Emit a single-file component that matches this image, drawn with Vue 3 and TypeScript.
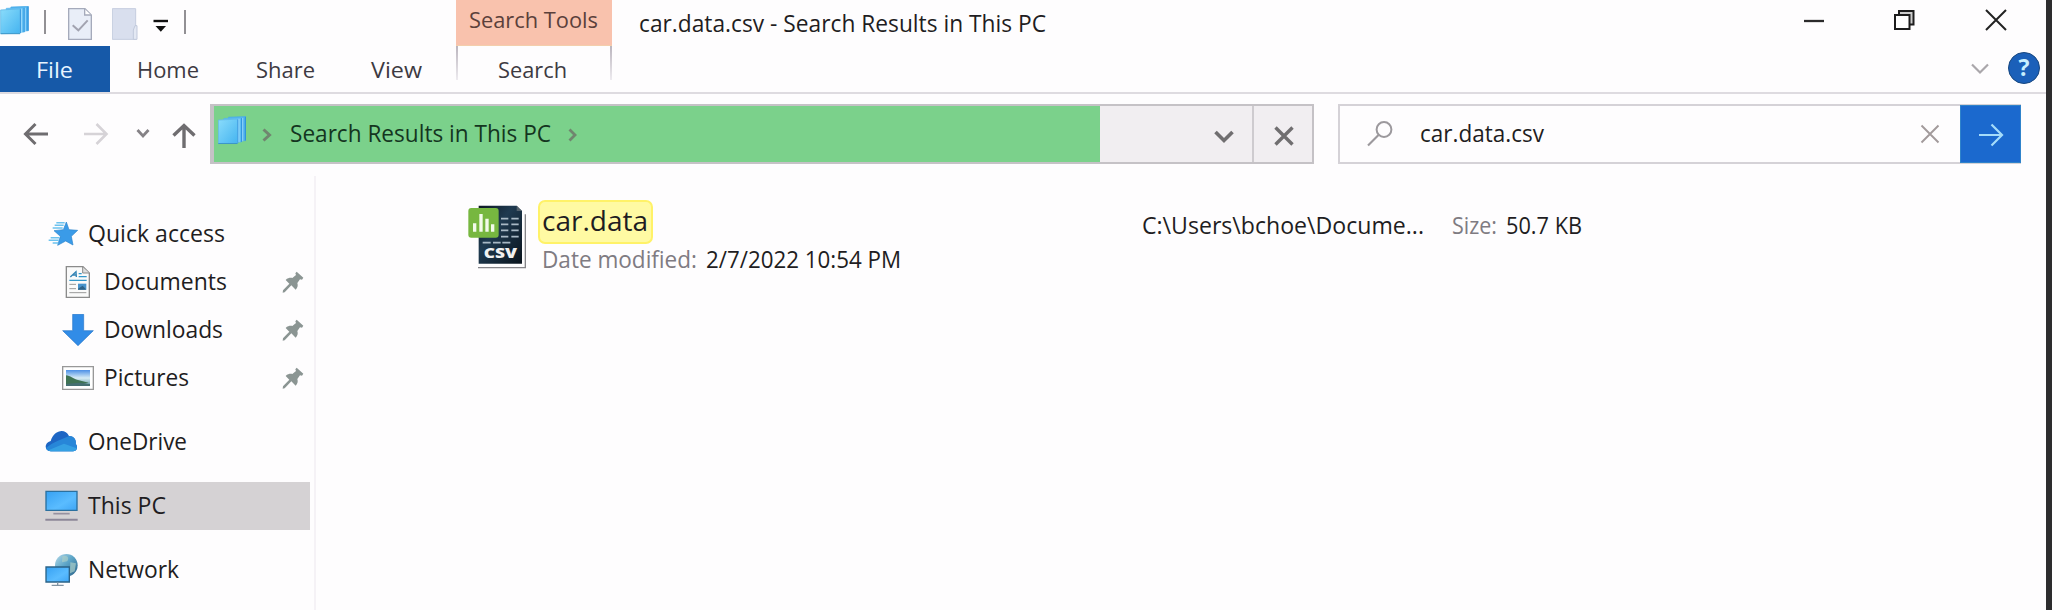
<script setup lang="ts">
import { h, type FunctionalComponent } from 'vue'

interface FitProps {
  text: string
  width: number
}

/* Single line of text set to an exact advance width. */
const FitText: FunctionalComponent<FitProps> = (props) =>
  h('svg', { width: props.width, height: 32, overflow: 'visible' }, [
    h(
      'text',
      { x: 0, y: 24, textLength: props.width, lengthAdjust: 'spacingAndGlyphs', fill: 'currentColor' },
      props.text,
    ),
  ])
FitText.props = ['text', 'width']

interface NavItem {
  label: string
  width: number
  icon: string
  child?: boolean
  gap?: boolean
  selected?: boolean
}

const navItems: NavItem[] = [
  { label: 'Quick access', width: 137, icon: 'star' },
  { label: 'Documents', width: 123, icon: 'doc', child: true },
  { label: 'Downloads', width: 119, icon: 'down', child: true },
  { label: 'Pictures', width: 85, icon: 'pic', child: true },
  { label: 'OneDrive', width: 99, icon: 'cloud', gap: true },
  { label: 'This PC', width: 78, icon: 'pc', gap: true, selected: true },
  { label: 'Network', width: 91, icon: 'net', gap: true },
]
</script>

<template>
  <div class="window">
    <svg class="defs" width="0" height="0">
      <defs>
        <linearGradient id="sheet" x1="0" y1="0" x2="1" y2="1">
          <stop offset="0" stop-color="#8adcfb" />
          <stop offset="1" stop-color="#45b4f0" />
        </linearGradient>
        <linearGradient id="screen" x1="0" y1="0" x2="1" y2="1">
          <stop offset="0" stop-color="#36a1f3" />
          <stop offset="0.6" stop-color="#5abcff" />
          <stop offset="1" stop-color="#3ea5f5" />
        </linearGradient>
        <linearGradient id="globe" x1="0" y1="0" x2="1" y2="1">
          <stop offset="0" stop-color="#b9dcea" />
          <stop offset="0.45" stop-color="#5ea6c8" />
          <stop offset="1" stop-color="#2a6288" />
        </linearGradient>
        <linearGradient id="scene" x1="0" y1="0" x2="0" y2="1">
          <stop offset="0" stop-color="#4b8fe6" />
          <stop offset="0.5" stop-color="#d6ecf6" />
          <stop offset="1" stop-color="#5f95a0" />
        </linearGradient>
        <linearGradient id="csvPage" x1="0" y1="0" x2="1" y2="1">
          <stop offset="0" stop-color="#0c1722" />
          <stop offset="0.4" stop-color="#1f3a50" />
          <stop offset="1" stop-color="#0a141d" />
        </linearGradient>
        <symbol id="stack" viewBox="0 0 86 88">
          <path d="M32 3 L85 1 V75 L32 79Z" fill="#4fb2ee" stroke="#49abe6" stroke-width="2" />
          <path d="M84 2 V75" stroke="#2a8edb" stroke-width="3" />
          <path d="M18 7 L73 5 V79 L18 82Z" fill="#62c0f5" stroke="#55b4ec" stroke-width="2" />
          <path d="M72 6 V79" stroke="#2f94de" stroke-width="3" />
          <path d="M1 12 L60 9 V83 L1 84Z" fill="url(#sheet)" stroke="#62b9e8" stroke-width="2.5" />
          <path d="M61 10 V82" stroke="#3a9be0" stroke-width="3" />
          <path d="M64.500 8 V80 M76 5 V77" stroke="#a5defb" stroke-width="2.500" />
          <path d="M1 84 H60" stroke="#3a96c8" stroke-width="3" />
        </symbol>
      </defs>
    </svg>

    <div class="client">
      <header class="titlebar">
        <svg class="app-icon" width="29" height="29"><use href="#stack" /></svg>
        <i class="sep first" />
        <svg class="qa-doc" width="24" height="32" viewBox="0 0 72 96">
          <path d="M2 2 H51 L70 21 V94 H2Z" fill="#e9eef8" stroke="#a5aabb" stroke-width="4" />
          <path d="M50 3 V21 H69" fill="#fff" stroke="#a5aabb" stroke-width="4" />
          <path d="M14 52 L31 67 L59 37" fill="none" stroke="#a2a3b0" stroke-width="6" />
        </svg>
        <svg class="qa-folder" width="26" height="32" viewBox="0 0 78 96">
          <path d="M1 2 H71 V94 H1Z" fill="#d9dfee" stroke="#c5cddf" stroke-width="3" />
          <path d="M64 94 V66 L69 53 H75 V94Z" fill="#e3e8f3" stroke="#c1c9db" stroke-width="3" />
        </svg>
        <svg class="qa-more" width="16" height="14" viewBox="0 0 16 14">
          <path d="M0.5 2 H15" stroke="#111" stroke-width="2.4" />
          <path d="M2.5 7 H13 L7.8 12.7Z" fill="#111" />
        </svg>
        <i class="sep second" />
        <div class="tools-tab"><FitText text="Search Tools" :width="129" /></div>
        <div class="title"><FitText text="car.data.csv - Search Results in This PC" :width="407" /></div>
        <div class="controls">
          <svg width="22" height="22" viewBox="0 0 22 22"><path d="M1 12 H21" stroke="#2b2b2b" stroke-width="2.3" /></svg>
          <svg width="22" height="22" viewBox="0 0 22 22" fill="none" stroke="#1d1d1d" stroke-width="2">
            <path d="M5 5 V2 H19.500 V15.5 H16" fill="#ccc" />
            <path d="M1 6 H15.500 V20 H1Z" fill="#fff" />
          </svg>
          <svg width="22" height="22" viewBox="0 0 22 22"><path d="M1 1 L21 21 M21 1 L1 21" stroke="#222" stroke-width="2" /></svg>
        </div>
      </header>

      <nav class="ribbon">
        <div class="file"><FitText text="File" :width="37" /></div>
        <div class="tab home"><FitText text="Home" :width="62" /></div>
        <div class="tab share"><FitText text="Share" :width="59" /></div>
        <div class="tab view"><FitText text="View" :width="51" /></div>
        <div class="tab search-tab"><FitText text="Search" :width="69" /></div>
        <svg class="collapse" width="18" height="12" viewBox="0 0 18 12">
          <path d="M1 1.5 L9 9.5 L17 1.5" fill="none" stroke="#aaa7ab" stroke-width="2.2" />
        </svg>
        <div class="help">?</div>
      </nav>

      <div class="toolbar">
        <div class="history">
          <svg width="210" height="60" viewBox="0 0 210 60" fill="none">
            <path d="M48 30 H26 M35.5 20 L25.5 30 L35.5 40" stroke="#6f6d70" stroke-width="3" />
            <path d="M84 30 H106 M96.500 20 L106.500 30 L96.500 40" stroke="#d6d3d7" stroke-width="2.6" />
            <path d="M137.500 26 L143 32 L148.500 26" stroke="#858286" stroke-width="2.8" />
            <path d="M184 44 V22 M173.500 31.500 L184 21.500 L194.500 31.500" stroke="#6f6d70" stroke-width="3.4" />
          </svg>
        </div>
        <div class="address">
          <div class="progress">
            <svg class="crumb-icon" width="28" height="29"><use href="#stack" /></svg>
            <svg class="crumb-arrow" width="10" height="14" viewBox="0 0 10 14"><path d="M1.500 1.500 L7.500 7 L1.500 12.500" fill="none" stroke="#70856f" stroke-width="3" /></svg>
            <FitText text="Search Results in This PC" :width="261" />
            <svg class="crumb-arrow last" width="10" height="14" viewBox="0 0 10 14"><path d="M1.500 1.500 L7 7 L1.500 12.500" fill="none" stroke="#70856f" stroke-width="2.8" /></svg>
          </div>
          <div class="drop">
            <svg width="20" height="14" viewBox="0 0 20 14"><path d="M1.500 2 L10 10.500 L18.500 2" fill="none" stroke="#706e70" stroke-width="3.6" /></svg>
          </div>
          <div class="stop">
            <svg width="20" height="20" viewBox="0 0 20 20"><path d="M1.500 1.500 L18.500 18.500 M18.500 1.500 L1.500 18.500" stroke="#706e70" stroke-width="3.4" /></svg>
          </div>
        </div>
        <div class="search">
          <svg class="glass" width="26" height="26" viewBox="0 0 26 26" fill="none" stroke="#9c999d">
            <circle cx="17" cy="8.500" r="7.400" stroke-width="2" />
            <path d="M11.500 14 L1 24.500" stroke-width="2.200" />
          </svg>
          <FitText text="car.data.csv" :width="124" />
          <svg class="clear" width="20" height="20" viewBox="0 0 20 20"><path d="M1.500 1.500 L18.500 18.500 M18.500 1.500 L1.500 18.500" stroke="#a29a9b" stroke-width="1.900" /></svg>
          <div class="go">
            <svg width="26" height="24" viewBox="0 0 26 24" fill="none" stroke="#a5dcfa" stroke-width="2.200"><path d="M1 12 H24 M13.500 1.500 L24 12 L13.500 22.500" /></svg>
          </div>
        </div>
      </div>

      <div class="body">
        <aside class="sidebar">
          <div
            v-for="item in navItems"
            :key="item.label"
            class="nav-row"
            :class="{ child: item.child, gap: item.gap, selected: item.selected, quick: item.icon === 'star' }"
          >
            <svg v-if="item.icon === 'star'" class="nav-icon" width="32" height="26" viewBox="0 0 96 78">
              <path d="M61 3 L69 26 L95 28 L76 46 L81 72 L59 60 L35 73 L43 46 L24 29 L52 26Z" fill="#3a9be8" stroke="#2a83cc" stroke-width="2" />
              <path d="M31 5 H56 M26 13 H53 M20 21 H50 M14 50 H40 M8 58 H38 M20 66 H37" stroke="#6cc2ee" stroke-width="4.500" />
            </svg>
            <svg v-else-if="item.icon === 'doc'" class="nav-icon" width="32" height="32" viewBox="0 0 96 96">
              <path d="M13 2 H63 L82 21 V94 H13Z" fill="#fafafa" stroke="#8b8b8b" stroke-width="4" />
              <path d="M62 3 V21 H82" fill="#ddd" stroke="#8b8b8b" stroke-width="3" />
              <path d="M25 33 L42 17 L43 33 M31 27 H43" fill="none" stroke="#3182b4" stroke-width="4" />
              <path d="M50 23 H59 M50 32 H74 M22 43 H74" stroke="#3297ca" stroke-width="4" />
              <path d="M22 55 H42 M22 68 H42 M22 80 H73" stroke="#999" stroke-width="3" />
              <path d="M48 53 H73 V71 H48Z" fill="#4993cb" />
              <path d="M48 68 L62 59 L73 71 H48Z" fill="#2e6287" />
            </svg>
            <svg v-else-if="item.icon === 'down'" class="nav-icon" width="32" height="32" viewBox="0 0 96 96">
              <path d="M32 1 H65 V50 H94 L48 95 L2 50 H32Z" fill="#318ce7" stroke="#2877c8" stroke-width="2" />
            </svg>
            <svg v-else-if="item.icon === 'pic'" class="nav-icon" width="32" height="32" viewBox="0 0 96 96">
              <path d="M2 14 H94 V82 H2Z" fill="#fff" stroke="#989898" stroke-width="4" />
              <path d="M12 24 H84 V72 H12Z" fill="url(#scene)" />
              <path d="M12 40 C25 41 33 51 48 54 L80 62 L60 67 L12 70Z" fill="#3f7354" />
              <path d="M12 66 L50 62 L84 66 V72 H12Z" fill="#456f72" />
            </svg>
            <svg v-else-if="item.icon === 'cloud'" class="nav-icon" width="33" height="32" viewBox="0 0 99 96">
              <path d="M17 76 C-2 75 -4 51 17 45 C26 13 60 4 72 30 C88 30 94 42 92 53 C101 64 94 76 84 76Z" fill="#1e66c4" />
              <path d="M72 30 C88 30 94 42 92 53 C101 64 94 76 84 76 H17 C9 76 4 71 3 66 C24 48 50 40 72 30Z" fill="#2786d8" />
              <path d="M10 73 L57 53 L95 67 C93 74 89 76 84 76 H17Z" fill="#35a0e3" />
            </svg>
            <svg v-else-if="item.icon === 'pc'" class="nav-icon" width="33" height="32" viewBox="0 0 99 96">
              <path d="M3 4 H96 V61 H3Z" fill="url(#screen)" stroke="#2b709f" stroke-width="4" />
              <path d="M25 71 H74" stroke="#9691a0" stroke-width="5" />
              <path d="M1 89 H98" stroke="#8d8799" stroke-width="6" />
            </svg>
            <svg v-else class="nav-icon" width="33" height="34" viewBox="0 0 99 102">
              <circle cx="64" cy="37" r="34" fill="url(#globe)" />
              <path d="M52 10 C68 5 74 15 66 25 L51 28Z M76 28 L93 31 L89 55 L75 61Z" fill="#aacdc7" opacity=".7" />
              <path d="M3 42 H73 V87 H3Z" fill="url(#screen)" stroke="#2b6388" stroke-width="4" />
              <path d="M38 88 V95 M20 97 H56" stroke="#8193a2" stroke-width="4" />
            </svg>
            <FitText class="nav-label" :text="item.label" :width="item.width" />
            <svg v-if="item.child" class="pin" width="22" height="22" viewBox="0 0 66 66">
              <path d="M44 2 L64 20 L60 26 L54 25 L46 36 C49 45 46 51 41 56 L28 43 L8 64 L2 65 L3 58 L22 38 L11 27 C18 20 26 20 31 21 L42 12 L40 7Z" fill="#8b9593" />
            </svg>
          </div>
        </aside>

        <main class="results">
          <div class="file-row">
            <svg class="csv" width="60" height="65" viewBox="0 0 180 195">
              <path d="M172 28 V188 H30" fill="none" stroke="#858589" stroke-width="4" />
              <path d="M32 4 H145 L164 22 V180 H32Z" fill="#fff" />
              <path d="M32 2 H146 L162 18 V176 H32Z" fill="url(#csvPage)" />
              <path d="M146 2 L162 18 H146Z" fill="#53616c" />
              <path d="M99 41 H121 M130 41 H152 M99 58 H121 M130 58 H152 M99 76 H121 M130 76 H152 M99 95 H121 M130 95 H152 M44 113 H68 M75 113 H98 M103 113 H127" stroke="#a9b9c5" stroke-width="5" />
              <rect x="1" y="9" width="91" height="89" rx="9" fill="#77b740" />
              <path d="M20 80 V55 M39 80 V27 M57 80 V41 M74 80 V58" stroke="#f3fbea" stroke-width="10" />
              <text x="47" y="159" textLength="100" lengthAdjust="spacingAndGlyphs" class="csv-text">CSV</text>
            </svg>
            <div class="file-info">
              <div class="file-name"><FitText text="car.data" :width="106" /></div>
              <div class="modified">
                <FitText class="muted" text="Date modified:" :width="155" />
                <FitText text="2/7/2022 10:54 PM" :width="195" />
              </div>
            </div>
            <div class="path"><FitText text="C:\Users\bchoe\Docume..." :width="282" /></div>
            <div class="size">
              <FitText class="muted" text="Size:" :width="45" />
              <FitText text="50.7 KB" :width="76" />
            </div>
          </div>
        </main>
      </div>
    </div>
  </div>
</template>

<style>
html,
body {
  margin: 0;
  background: #2d2d2e;
}
</style>

<style scoped>
.window {
  width: 2052px;
  height: 610px;
  overflow: hidden;
  background: #2d2d2e;
  color: #1f1d22;
  font-family: 'Open Sans', 'Noto Sans', sans-serif;
  font-size: 24px;
}
.window * { box-sizing: border-box; }
svg { display: block; flex: none; }
.defs { position: absolute; }
.client {
  width: 2046px;
  height: 610px;
  background: #fefdfe;
  display: flex;
  flex-direction: column;
}
.titlebar { display: flex; height: 46px; align-items: flex-start; }
.app-icon { margin-top: 6px; }
.sep { width: 2px; height: 24px; margin-top: 10px; background: #929094; }
.sep.first { margin-left: 15px; }
.sep.second { margin-left: 15px; }
.qa-doc { margin: 8px 0 0 22px; }
.qa-folder { margin: 8px 0 0 20px; }
.qa-more { margin: 19px 0 0 15px; }
.tools-tab {
  width: 156px;
  height: 46px;
  margin-left: 270px;
  padding: 4px 0 0 13px;
  background: #f9c2ad;
  border-bottom: 1px solid #f3cfac;
  color: #5b403b;
  font-size: 22px;
}
.title { margin: 8px 0 0 27px; }
.controls { display: flex; margin-left: auto; padding: 9px 39px 0 0; gap: 69px; }
.ribbon {
  display: flex;
  height: 48px;
  border-bottom: 2px solid #dedbe0;
  font-size: 22px;
  color: #3d3a42;
}
.file {
  width: 110px;
  background: #1659a8;
  color: #e7f4ff;
  padding: 8px 0 0 36px;
}
.tab { padding-top: 8px; }
.home { margin-left: 27px; }
.share { margin-left: 57px; }
.view { margin-left: 56px; }
.search-tab {
  width: 156px;
  height: 34px;
  margin-left: 34px;
  padding-left: 40px;
  border: solid;
  border-width: 0 2px;
  border-image: linear-gradient(#b9b3bc, #efedf1) 1;
}
.collapse { margin: 17px 19px 0 auto; }
.help {
  width: 32px;
  height: 32px;
  margin: 6px 6px 0 0;
  border-radius: 50%;
  border: 1.5px solid #174780;
  background: #1b60b9;
  color: #c7efff;
  font-size: 23px;
  font-weight: 700;
  line-height: 29px;
  text-align: center;
}
.toolbar { display: flex; padding-top: 10px; height: 82px; }
.history { width: 210px; }
.address {
  display: flex;
  width: 1104px;
  height: 60px;
  border: 2px solid #c5c2c6;
  border-left-width: 4px;
  background: #f1eef1;
}
.progress {
  display: flex;
  align-items: flex-start;
  width: 886px;
  background: #7bd18b;
  color: #14351f;
}
.crumb-icon { margin: 10px 0 0 4px; }
.crumb-arrow { margin: 22px 17px 0 16px; }
.progress > svg:nth-child(3) { margin: 12px 0 0 1px; }
.crumb-arrow.last { margin: 22px 0 0 17px; }
.drop {
  display: flex;
  flex: 1;
  justify-content: flex-end;
  padding: 24px 18px 0 0;
  border-right: 2px solid #cecbcf;
}
.stop { width: 58px; padding: 20px 0 0 20px; }
.search {
  display: flex;
  width: 683px;
  height: 60px;
  margin-left: 24px;
  border: 2px solid #d5d2d7;
  border-right: 0;
  align-items: flex-start;
}
.glass { margin: 15px 27px 0 27px; }
.search > svg:nth-child(2) { margin-top: 12px; }
.clear { margin: 18px 20px 0 auto; }
.go {
  width: 61px;
  height: 58px;
  margin-top: -1px;
  padding: 17px 0 0 17px;
  background: #1b69ce;
  border: 1.5px solid #2f83cb;
}
.body { display: flex; flex: 1; }
.sidebar {
  width: 316px;
  height: 434px;
  padding-top: 34px;
  border-right: 2px solid #f5f2f6;
}
.nav-row {
  display: flex;
  align-items: center;
  width: 310px;
  height: 48px;
  padding-left: 45px;
}
.nav-row.quick { padding-left: 46px; }
.nav-row.child { padding-left: 62px; }
.nav-row.gap { margin-top: 16px; }
.nav-row.selected { background: #d5d2d4; }
.nav-label { margin-left: 10px; }
.pin { margin: 0 6px 0 auto; }
.results { flex: 1; padding-top: 24px; }
.file-row { display: flex; height: 72px; }
.csv { margin: 5px 0 0 152px; }
.csv-text { font-size: 42px; font-weight: 800; fill: #f1f1f1; }
.file-info { width: 590px; margin-left: 10px; }
.file-name {
  width: 115px;
  height: 44px;
  padding: 5px 0 0 2px;
  border: 2px solid #fff268;
  border-radius: 7px;
  background: #fffaa3;
  font-size: 28px;
}
.modified { display: flex; gap: 9px; margin: 0 0 0 4px; }
.path { margin: 10px 0 0 14px; }
.size { display: flex; gap: 9px; margin: 10px 0 0 28px; }
.muted { color: #7f7b82; }
</style>
